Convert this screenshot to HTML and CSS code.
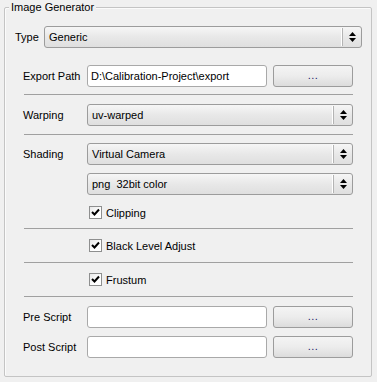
FILE: index.html
```html
<!DOCTYPE html>
<html>
<head>
<meta charset="utf-8">
<link rel="stylesheet" href="styles.css">
</head>
<body>
<div class="group">
  <div class="title">Image Generator</div>
  <div class="row type-row">
    <span class="label type-label">Type</span>
    <div class="combo combo-wide"><span class="combo-text">Generic</span><span class="arrows"><svg width="7" height="10" viewBox="0 0 7 10"><path d="M3.5 0 L7 4 L0 4 Z M0 6 L7 6 L3.5 10 Z" fill="#000"/></svg></span></div>
  </div>
  <div class="section">
    <div class="row export-row">
      <span class="label">Export Path</span>
      <div class="field">D:\Calibration-Project\export</div>
      <div class="btn">...</div>
    </div>
    <div class="sep sep-1"></div>
    <div class="row warp-row">
      <span class="label">Warping</span>
      <div class="combo"><span class="combo-text">uv-warped</span><span class="arrows"><svg width="7" height="10" viewBox="0 0 7 10"><path d="M3.5 0 L7 4 L0 4 Z M0 6 L7 6 L3.5 10 Z" fill="#000"/></svg></span></div>
    </div>
    <div class="sep sep-2"></div>
    <div class="row shade-row">
      <span class="label">Shading</span>
      <div class="combo"><span class="combo-text">Virtual Camera</span><span class="arrows"><svg width="7" height="10" viewBox="0 0 7 10"><path d="M3.5 0 L7 4 L0 4 Z M0 6 L7 6 L3.5 10 Z" fill="#000"/></svg></span></div>
    </div>
    <div class="row png-row">
      <span class="label"></span>
      <div class="combo"><span class="combo-text">png&nbsp;&nbsp;32bit color</span><span class="arrows"><svg width="7" height="10" viewBox="0 0 7 10"><path d="M3.5 0 L7 4 L0 4 Z M0 6 L7 6 L3.5 10 Z" fill="#000"/></svg></span></div>
    </div>
    <div class="row check-row clip-row">
      <span class="label"></span>
      <span class="check"><svg width="9" height="9" viewBox="0 0 9 9"><path d="M1 4 L3.5 6.5 L8 1.5" stroke="#000" stroke-width="2" fill="none"/></svg></span>
      <span class="check-text">Clipping</span>
    </div>
    <div class="sep sep-3"></div>
    <div class="row check-row black-row">
      <span class="label"></span>
      <span class="check"><svg width="9" height="9" viewBox="0 0 9 9"><path d="M1 4 L3.5 6.5 L8 1.5" stroke="#000" stroke-width="2" fill="none"/></svg></span>
      <span class="check-text">Black Level Adjust</span>
    </div>
    <div class="sep sep-4"></div>
    <div class="row check-row frustum-row">
      <span class="label"></span>
      <span class="check"><svg width="9" height="9" viewBox="0 0 9 9"><path d="M1 4 L3.5 6.5 L8 1.5" stroke="#000" stroke-width="2" fill="none"/></svg></span>
      <span class="check-text">Frustum</span>
    </div>
    <div class="sep sep-5"></div>
    <div class="row pre-row">
      <span class="label">Pre Script</span>
      <div class="field"></div>
      <div class="btn">...</div>
    </div>
    <div class="row post-row">
      <span class="label">Post Script</span>
      <div class="field"></div>
      <div class="btn">...</div>
    </div>
  </div>
</div>
</body>
</html>
```

FILE: styles.css
```css
html, body {
  margin: 0;
  padding: 0;
  background: #f0f0f0;
}
body {
  font-family: "Liberation Sans", Arial, sans-serif;
  font-size: 11px;
  color: #000;
  width: 377px;
  height: 382px;
  overflow: hidden;
}
.group {
  position: relative;
  box-sizing: border-box;
  margin: 7px 0 0 4px;
  width: 368px;
  height: 370px;
  border: 1px solid #c4c4c4;
  border-radius: 2px;
  box-shadow: inset 1px 1px 0 #fbfbfb;
  padding: 18px 9px 0 10px;
}
.title {
  position: absolute;
  top: -7px;
  left: 4px;
  padding: 0 2px 0 2px;
  background: #f0f0f0;
  line-height: 13px;
}
.row {
  display: flex;
  align-items: center;
}
.type-row {
  height: 22px;
}
.type-label {
  width: 29px;
}
.combo {
  box-sizing: border-box;
  flex: 1;
  height: 22px;
  border: 1px solid #9c9c9c;
  border-radius: 3px;
  background: linear-gradient(#f6f6f6, #e8e8e8 50%, #dfdfdf);
  display: flex;
  align-items: center;
  padding-left: 4px;
}
.combo-text {
  flex: 1;
}
.arrows {
  box-sizing: border-box;
  width: 19px;
  height: 18px;
  border-left: 1px solid #b4b4b4;
  box-shadow: -1px 0 0 #ffffff;
  display: flex;
  align-items: center;
  justify-content: center;
}
.arrows svg {
  display: block;
}
.section {
  padding: 0 9px 0 8px;
}
.section .label {
  width: 64px;
  flex: none;
}
.export-row {
  margin-top: 17px;
  height: 22px;
}
.field {
  box-sizing: border-box;
  width: 180px;
  height: 22px;
  border: 1px solid #a9a9a9;
  border-radius: 3px;
  background: #fff;
  padding-left: 3px;
  line-height: 20px;
  white-space: nowrap;
}
.btn {
  box-sizing: border-box;
  width: 80px;
  height: 22px;
  margin-left: 6px;
  border: 1px solid #9c9c9c;
  border-radius: 3px;
  background: linear-gradient(#f4f4f4, #ececec 50%, #dcdcdc);
  text-align: center;
  line-height: 18px;
  color: #1a1a6a;
  letter-spacing: 0.5px;
}
.sep {
  height: 1px;
  background: #a0a0a0;
  margin-left: 1px;
}
.sep-1 { margin-top: 7px; }
.warp-row { margin-top: 9px; }
.sep-2 { margin-top: 8px; }
.shade-row { margin-top: 8px; }
.png-row { margin-top: 8px; }
.check-row {
  height: 13px;
}
.clip-row { margin-top: 11px; }
.sep-3 { margin-top: 9px; }
.black-row { margin-top: 10px; }
.sep-4 { margin-top: 10px; }
.frustum-row { margin-top: 10px; }
.sep-5 { margin-top: 10px; }
.pre-row { margin-top: 9px; }
.post-row { margin-top: 8px; }
.check {
  box-sizing: border-box;
  width: 13px;
  height: 13px;
  margin-left: 2px;
  border: 1px solid #8e8f8f;
  background: linear-gradient(135deg, #e8e8e8, #ffffff 60%);
  display: flex;
  align-items: center;
  justify-content: center;
}
.check svg {
  display: block;
}
.check-text {
  margin-left: 4px;
}
```
